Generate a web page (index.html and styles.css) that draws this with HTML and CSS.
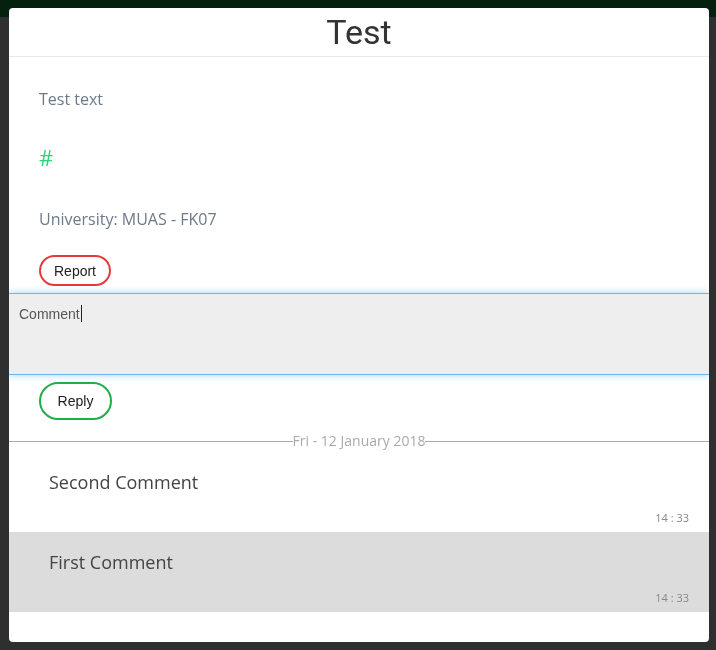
FILE: index.html
```
<!DOCTYPE html>
<html>
<head>
<meta charset="utf-8">
<link rel="stylesheet" href="styles.css">
</head>
<body>
<div class="topbar"></div>
<div class="modal">
  <div class="modal-header">Test</div>
  <div class="info">
    <p class="line text">Test text</p>
    <p class="line hash">#</p>
    <p class="line uni">University: MUAS - FK07</p>
    <button class="btn btn-report">Report</button>
  </div>
  <div class="comment-box">Comment<span class="caret"></span></div>
  <div class="reply-wrap">
    <button class="btn btn-reply">Reply</button>
  </div>
  <div class="divider"><span>Fri - 12 January 2018</span></div>
  <div class="comments">
    <div class="comment">
      <div class="comment-text">Second Comment</div>
      <div class="comment-time">14 : 33</div>
    </div>
    <div class="comment alt">
      <div class="comment-text">First Comment</div>
      <div class="comment-time">14 : 33</div>
    </div>
  </div>
</div>
</body>
</html>
```
FILE: styles.css
```
html, body {
  margin: 0;
  padding: 0;
  height: 100%;
}
body {
  background: #2f2f2f;
  font-family: "Open Sans", "Liberation Sans", sans-serif;
  overflow: hidden;
}
.topbar {
  height: 17px;
  background: #062010;
}
.modal {
  position: fixed;
  top: 8px;
  left: 9px;
  width: 700px;
  height: 634px;
  background: #fff;
  border-radius: 4px;
  overflow: hidden;
}
.modal-header {
  height: 48px;
  line-height: 48px;
  text-align: center;
  font-family: Roboto, "Liberation Sans", sans-serif;
  font-size: 34px;
  color: #333;
  border-bottom: 1px solid #e9e9e9;
}
.info {
  padding: 30px 30px 0 30px;
  display: flex;
  flex-direction: column;
  align-items: flex-start;
}
.line {
  margin: 0;
  color: #6c7a89;
  font-size: 16px;
  line-height: 24px;
}
.hash {
  margin-top: 31px;
  font-size: 22px;
  line-height: 30px;
  color: #2ed47a;
}
.uni {
  margin-top: 35px;
}
.btn {
  background: #fff;
  font-family: "Liberation Sans", Arial, sans-serif;
  font-size: 14px;
  color: #222;
  padding: 0;
  cursor: pointer;
}
.btn-report {
  margin-top: 24px;
  width: 72px;
  height: 31px;
  border: 2px solid #e53a3a;
  border-radius: 16px;
}
.comment-box {
  margin-top: 7px;
  height: 59px;
  padding: 11px 10px 10px 10px;
  background: #eeeeee;
  border-top: 1px solid #6ab6f2;
  border-bottom: 1px solid #6ab6f2;
  box-shadow: 0 0 7px rgba(100, 181, 246, 0.6);
  font-family: "Liberation Sans", Arial, sans-serif;
  font-size: 14px;
  line-height: 18px;
  color: #555;
}
.caret {
  display: inline-block;
  width: 1px;
  height: 17px;
  background: #222;
  vertical-align: -3px;
  margin-left: 1px;
}
.reply-wrap {
  padding: 7px 30px 0 30px;
}
.btn-reply {
  width: 73px;
  height: 38px;
  border: 2px solid #1fae4a;
  border-radius: 19px;
}
.divider {
  margin-top: 14px;
  height: 14px;
  display: flex;
  align-items: center;
  color: #aaa;
  font-size: 14px;
}
.divider::before,
.divider::after {
  content: "";
  flex: 1;
  border-top: 1px solid #aaa;
}
.divider span {
  line-height: 14px;
}
.comments {
  margin-top: 4px;
}
.comment {
  height: 80px;
  padding: 18px 20px 0 40px;
  box-sizing: border-box;
  display: flex;
  flex-direction: column;
}
.comment.alt {
  background: #dcdcdc;
}
.comment-text {
  font-size: 18px;
  line-height: 24px;
  color: #444;
}
.comment-time {
  margin-top: 18px;
  text-align: right;
  font-size: 11px;
  line-height: 12px;
  color: #888;
}
```
